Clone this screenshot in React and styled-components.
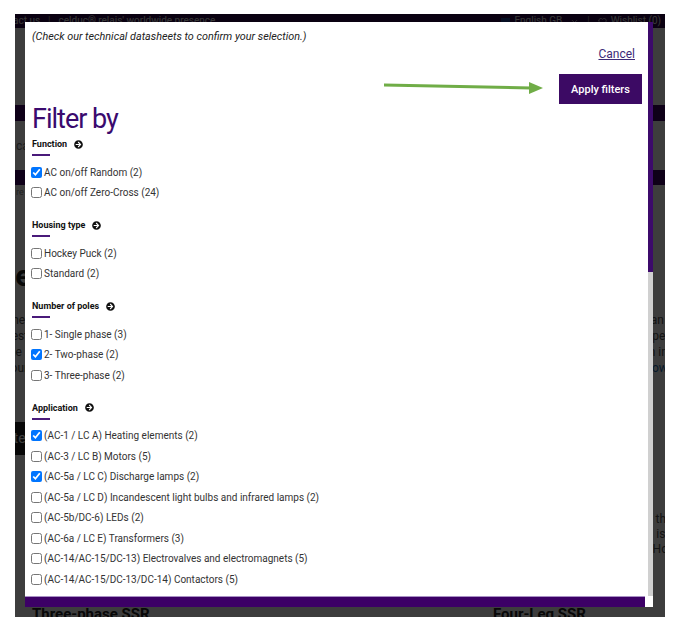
import React from 'react'
import styled, { createGlobalStyle } from 'styled-components'
import { FaArrowCircleRight } from 'react-icons/fa'
import { Heart, ChevronDown } from 'lucide-react'

const GlobalStyle = createGlobalStyle`
    html, body {
        margin: 0;
        padding: 0;
        background: #fff;
    }
    body {
        font-family: Roboto, "Liberation Sans", Arial, sans-serif;
    }
    * { box-sizing: border-box; }
`;

const Frame = styled.div`
    width: 677px;
    height: 631px;
    padding: 14px 12px 14px 15px;
`;

const Screen = styled.div`
    position: relative;
    width: 650px;
    height: 603px;
    overflow: hidden;
    background: #fff;
`;

/* ---------- page behind the modal ---------- */

const Page = styled.div`
    display: flex;
    flex-direction: column;
    color: #444;
`;

const TopBar = styled.div`
    height: 14px;
    background: #2b0747;
    color: #e6e6e6;
    font-size: 10px;
    line-height: 10px;
    display: flex;
    justify-content: space-between;
    white-space: nowrap;
    padding-right: 4px;
`;

const TopGroup = styled.div`
    display: flex;
    align-items: center;
    gap: 8px;
    margin-left: ${props => props.shift || 0}px;
`;

const Sep = styled.span`
    color: #999;
`;

const Flag = styled.span`
    width: 9px;
    height: 6px;
    background: #1c3f94;
    display: inline-block;
    margin-right: -4px;
`;

const Masthead = styled.div`
    height: 77px;
    background: #fff;
`;

const Band = styled.div`
    height: ${props => props.h}px;
    background: #3c0066;
`;

const Crumbs = styled.div`
    height: 49px;
    display: flex;
    align-items: center;
    padding-left: 1px;
    font-size: 12px;
    color: #777;
    white-space: nowrap;
`;

const Subline = styled.div`
    height: 14px;
    font-size: 9px;
    line-height: 14px;
    color: #888;
    padding-left: 1px;
`;

const PageTitle = styled.h1`
    margin: 60px 0 0 -19px;
    font-size: 30px;
    line-height: 34px;
    font-weight: 700;
    color: #222;
    white-space: nowrap;
`;

const IntroRow = styled.div`
    margin: 19px -60px 0 -10px;
    height: 64px;
    overflow: hidden;
    display: grid;
    grid-template-columns: 1fr 1fr;
    gap: 40px;
    font-size: 12px;
    line-height: 16px;
    color: #555;
`;

const PageLink = styled.span`
    color: #1f6fb2;
`;

const DarkButton = styled.div`
    margin: 46px 0 0 -30px;
    width: 160px;
    height: 33px;
    background: #1e1e1e;
    color: #fff;
    font-size: 14px;
    line-height: 33px;
    padding-left: 14px;
`;

const CardText = styled.div`
    margin: 57px -40px 0 0;
    height: 45px;
    overflow: hidden;
    padding-left: 470px;
    font-size: 12px;
    line-height: 15px;
    color: #555;
`;

const ProductRow = styled.div`
    margin-top: 48px;
    display: flex;
`;

const ProductTitle = styled.div`
    width: ${props => props.w}px;
    padding-left: ${props => props.pad}px;
    font-size: 15px;
    font-weight: 700;
    color: #222;
    white-space: nowrap;
`;

const Dim = styled.div`
    position: absolute;
    inset: 0;
    background: rgba(0, 0, 0, 0.76);
`;

/* ---------- modal ---------- */

const Modal = styled.div`
    position: absolute;
    left: 10px;
    top: 8px;
    width: 628px;
    height: 585px;
    background: #fff;
    display: grid;
    grid-template-columns: 1fr 5px;
    grid-template-rows: 1fr 11px;
`;

const Body = styled.div`
    position: relative;
    overflow: hidden;
    padding: 0 6px 0 7px;
    color: #222;
`;

const Note = styled.p`
    margin: 8px 0 0;
    font-size: 10.8px;
    line-height: 14px;
    font-style: italic;
    color: #222;
`;

const Actions = styled.div`
    display: flex;
    flex-direction: column;
    align-items: flex-end;
`;

const CancelLink = styled.a`
    margin: 3px 7px 0 0;
    font-size: 12px;
    line-height: 14px;
    color: #3d2a78;
    text-decoration: underline;
    cursor: pointer;
`;

const ApplyButton = styled.button`
    margin-top: 13px;
    width: 83px;
    height: 30px;
    border: 0;
    background: #3c0a64;
    color: #fff;
    font-family: Roboto, "Liberation Sans", Arial, sans-serif;
    font-size: 11px;
    font-weight: 500;
    cursor: pointer;
`;

const Arrow = styled.svg`
    position: absolute;
    left: 358px;
    top: 58px;
`;

const FilterTitle = styled.h2`
    margin: 0;
    font-size: 27px;
    letter-spacing: -1px;
    line-height: 30px;
    font-weight: 400;
    color: #3a0a6e;
`;

const Sections = styled.div`
    margin-top: 3px;
    display: flex;
    flex-direction: column;
    gap: 15px;
`;

const SectionHead = styled.div`
    display: flex;
    align-items: center;
    gap: 7px;
    font-size: 9px;
    line-height: 14px;
    font-weight: 700;
    color: #111;
`;

const Underline = styled.div`
    margin-top: 3px;
    width: 18px;
    height: 2px;
    background: #4a1a7a;
`;

const Options = styled.div`
    margin-top: 6px;
    display: flex;
    flex-direction: column;
`;

const Option = styled.label`
    height: 20.5px;
    display: flex;
    align-items: center;
    gap: 2px;
    font-size: 10px;
    color: #333;
`;

const Check = styled.input`
    width: 11px;
    height: 11px;
    margin: 0 0 0 -1px;
    accent-color: #0075ff;
`;

const VTrack = styled.div`
    background: #d0d0d0;
    display: flex;
    flex-direction: column;
`;

const VThumb = styled.div`
    height: 250px;
    background: #3c0a6b;
`;

const HTrack = styled.div`
    background: #fff;
    display: flex;
`;

const HThumb = styled.div`
    width: 620px;
    background: #3c0066;
    border-top: 1px solid #a890c4;
`;

const Corner = styled.div`
    background: #fff;
`;

const sections = [
    {
        title: 'Function',
        options: [
            ['AC on/off Random (2)', true],
            ['AC on/off Zero-Cross (24)', false],
        ],
    },
    {
        title: 'Housing type',
        options: [
            ['Hockey Puck (2)', false],
            ['Standard (2)', false],
        ],
    },
    {
        title: 'Number of poles',
        options: [
            ['1- Single phase (3)', false],
            ['2- Two-phase (2)', true],
            ['3- Three-phase (2)', false],
        ],
    },
    {
        title: 'Application',
        options: [
            ['(AC-1 / LC A) Heating elements (2)', true],
            ['(AC-3 / LC B) Motors (5)', false],
            ['(AC-5a / LC C) Discharge lamps (2)', true],
            ['(AC-5a / LC D) Incandescent light bulbs and infrared lamps (2)', false],
            ['(AC-5b/DC-6) LEDs (2)', false],
            ['(AC-6a / LC E) Transformers (3)', false],
            ['(AC-14/AC-15/DC-13) Electrovalves and electromagnets (5)', false],
            ['(AC-14/AC-15/DC-13/DC-14) Contactors (5)', false],
        ],
    },
];

const BackgroundPage = () => (
    <Page>
        <TopBar>
            <TopGroup shift={-23}>
                <span>Contact us</span>
                <Sep>|</Sep>
                <span>celduc® relais' worldwide presence</span>
            </TopGroup>
            <TopGroup>
                <Flag />
                <span>English GB</span>
                <ChevronDown size={9} />
                <Sep>|</Sep>
                <Heart size={9} />
                <span style={{ marginLeft: -4 }}>Wishlist (0)</span>
            </TopGroup>
        </TopBar>
        <Masthead />
        <Band h={16} />
        <Crumbs>catalogue &gt; Solid state relays &gt; Selection guide</Crumbs>
        <Band h={15} />
        <Subline>re all our products by their characteristics</Subline>
        <PageTitle>Relay selection guide</PageTitle>
        <IntroRow>
            <div>
                The Relay selection guide helps you find the solid state relay best suited to your
                application. Select your filters, then compare the references proposed in the results.
                OK Our teams remain at your disposal for any request. Please note that some references
                may not be available in every country.
            </div>
            <div>
                Our relays are available in several housings; they can be single, two or three-phase
                and are designed for long life operation in demanding environments. Products can be
                chosen in many versions and options for your installation needs.
                <PageLink> How to choose</PageLink>
            </div>
        </IntroRow>
        <DarkButton>Filter</DarkButton>
        <CardText>
            Two-phase relays switch two of the three phases of a load, while the third is left
            on or off permanently. Available in Hockey Puck and other housings.
        </CardText>
        <ProductRow>
            <ProductTitle w={315} pad={17}>Three-phase SSR</ProductTitle>
            <ProductTitle w={335} pad={163}>Four-Leg SSR</ProductTitle>
        </ProductRow>
    </Page>
);

const App = () => {
    return (
        <>
            <GlobalStyle />
            <Frame>
                <Screen>
                    <BackgroundPage />
                    <Dim />
                    <Modal>
                        <Body>
                            <Note>(Check our technical datasheets to confirm your selection.)</Note>
                            <Actions>
                                <CancelLink>Cancel</CancelLink>
                                <ApplyButton>Apply filters</ApplyButton>
                            </Actions>
                            <Arrow width="160" height="16" viewBox="0 0 160 16">
                                <line x1="1" y1="5" x2="148" y2="8" stroke="#70ad47" strokeWidth="3" />
                                <polygon points="146,2 160,8 146,14" fill="#70ad47" />
                            </Arrow>
                            <FilterTitle>Filter by</FilterTitle>
                            <Sections>
                                {sections.map(section => (
                                    <section key={section.title}>
                                        <SectionHead>
                                            {section.title}
                                            <FaArrowCircleRight size={9} />
                                        </SectionHead>
                                        <Underline />
                                        <Options>
                                            {section.options.map(([label, checked]) => (
                                                <Option key={label}>
                                                    <Check type="checkbox" defaultChecked={checked} />
                                                    {label}
                                                </Option>
                                            ))}
                                        </Options>
                                    </section>
                                ))}
                            </Sections>
                        </Body>
                        <VTrack>
                            <VThumb />
                        </VTrack>
                        <HTrack>
                            <HThumb />
                        </HTrack>
                        <Corner />
                    </Modal>
                </Screen>
            </Frame>
        </>
    )
}

export default App
